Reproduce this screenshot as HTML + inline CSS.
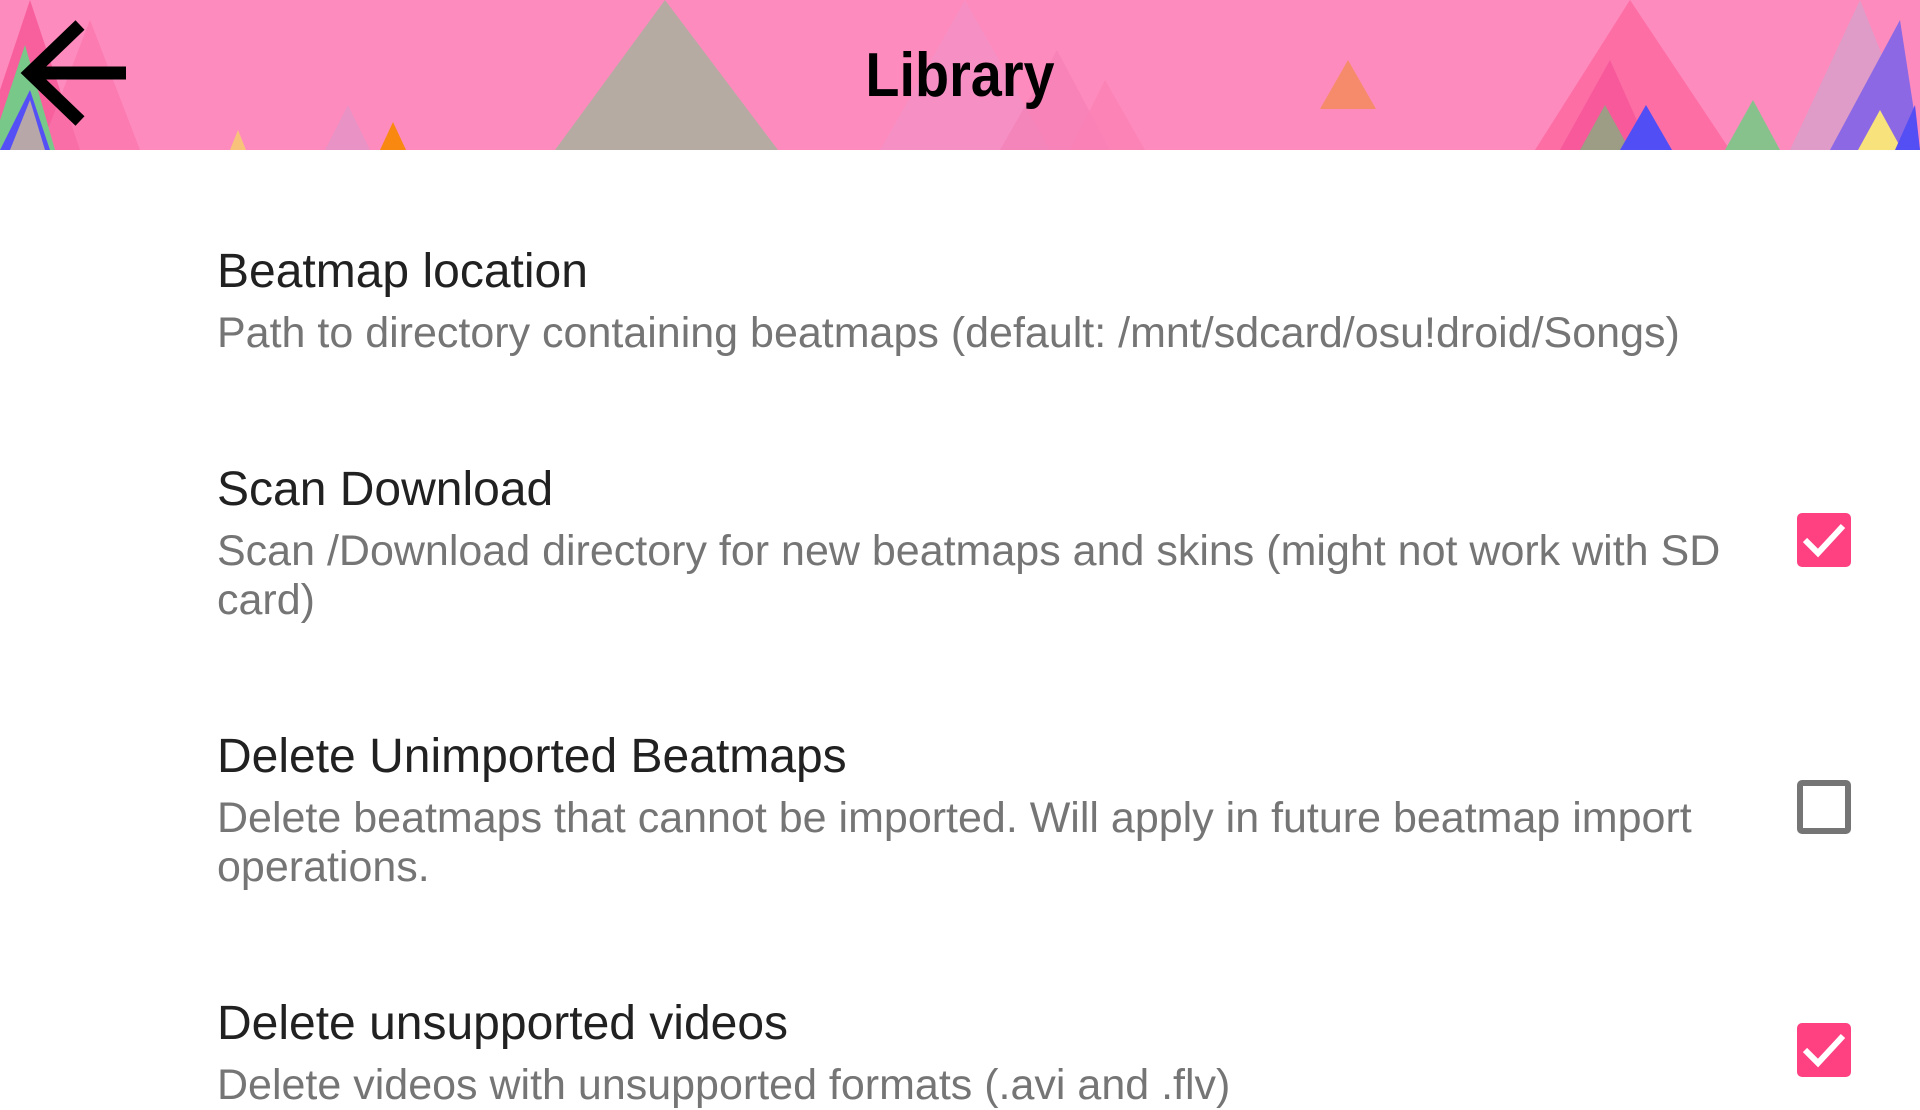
<!DOCTYPE html>
<html><head><meta charset="utf-8"><style>
body{margin:0;width:1920px;height:1080px;overflow:hidden;background:#fff;font-family:"Liberation Sans",sans-serif;position:relative}
.hdr{position:absolute;left:0;top:0;width:1920px;height:150px;background:#fe8bbd;overflow:hidden}
.t{position:absolute;left:0;width:1920px;text-align:center;top:40px;font-size:62px;font-weight:bold;color:#000;transform:scaleX(.9)}
.it{position:absolute;left:217px;width:1515px}
.ti{font-size:48px;color:#212121;line-height:56px}
.su{font-size:43px;color:#757575;line-height:49px;margin-top:9px}
.cb{position:absolute;left:1797px;width:54px;height:54px;border-radius:5px;box-sizing:border-box}
.on{background:#ff4081}
.off{border:6px solid #757575}
</style></head><body>
<div class="hdr">
<svg width="1920" height="150" style="position:absolute;left:0;top:0">
<polygon points="-20,150 30,0 80,150" fill="#f7609c"/>
<polygon points="40,150 90,20 140,150" fill="#fb75ac" opacity=".7"/>
<polygon points="-10,150 25,45 55,150" fill="#78c88a"/>
<polygon points="0,150 30,90 50,150" fill="#5550f5"/>
<polygon points="10,150 30,100 45,150" fill="#b8a7a8"/>
<polygon points="555,150 665,0 778,150" fill="#b6aba3"/>
<polygon points="230,150 238,130 246,150" fill="#f9c27a"/>
<polygon points="325,150 348,105 370,150" fill="#e992c6"/>
<polygon points="380,150 393,122 406,150" fill="#f8880f"/>
<polygon points="880,150 965,0 1050,150" fill="#f093c8" opacity=".6"/>
<polygon points="1000,150 1057,50 1110,150" fill="#f47fb6" opacity=".6"/>
<polygon points="1070,150 1105,80 1145,150" fill="#fb80b4" opacity=".7"/>
<polygon points="1320,109 1348,60 1376,109" fill="#f68b6b"/>
<polygon points="1535,150 1630,0 1730,150" fill="#fd6ea5"/>
<polygon points="1560,150 1610,60 1650,150" fill="#f7599a"/>
<polygon points="1580,150 1605,105 1630,150" fill="#9d9c84"/>
<polygon points="1620,150 1646,105 1672,150" fill="#524ef5"/>
<polygon points="1725,150 1753,100 1780,150" fill="#87c28d"/>
<polygon points="1790,150 1860,0 1920,150" fill="#d7a0cb" opacity=".8"/>
<polygon points="1830,150 1900,20 1920,150" fill="#8c68e5"/>
<polygon points="1858,150 1880,110 1902,150" fill="#f8e27c"/>
<polygon points="1895,150 1915,105 1920,150" fill="#544ef5"/>
</svg>
<svg width="130" height="130" style="position:absolute;left:18px;top:15px"><path d="M108 58 H14 M62 10 L12 58 L62 106" stroke="#000" stroke-width="13" fill="none"/></svg>
<div class="t">Library</div>
</div>
<div class="it" style="top:244px"><div class="ti">Beatmap location</div><div class="su">Path to directory containing beatmaps (default: /mnt/sdcard/osu!droid/Songs)</div></div>
<div class="it" style="top:462px"><div class="ti">Scan Download</div><div class="su">Scan /Download directory for new beatmaps and skins (might not work with SD card)</div></div>
<div class="it" style="top:729px"><div class="ti">Delete Unimported Beatmaps</div><div class="su">Delete beatmaps that cannot be imported. Will apply in future beatmap import operations.</div></div>
<div class="it" style="top:996px"><div class="ti">Delete unsupported videos</div><div class="su">Delete videos with unsupported formats (.avi and .flv)</div></div>
<div class="cb on" style="top:513px"><svg width="54" height="54"><path d="M8 27 L21 40 L46 13" stroke="#fff" stroke-width="6" fill="none"/></svg></div>
<div class="cb off" style="top:780px"></div>
<div class="cb on" style="top:1023px"><svg width="54" height="54"><path d="M8 27 L21 40 L46 13" stroke="#fff" stroke-width="6" fill="none"/></svg></div>
</body></html>
